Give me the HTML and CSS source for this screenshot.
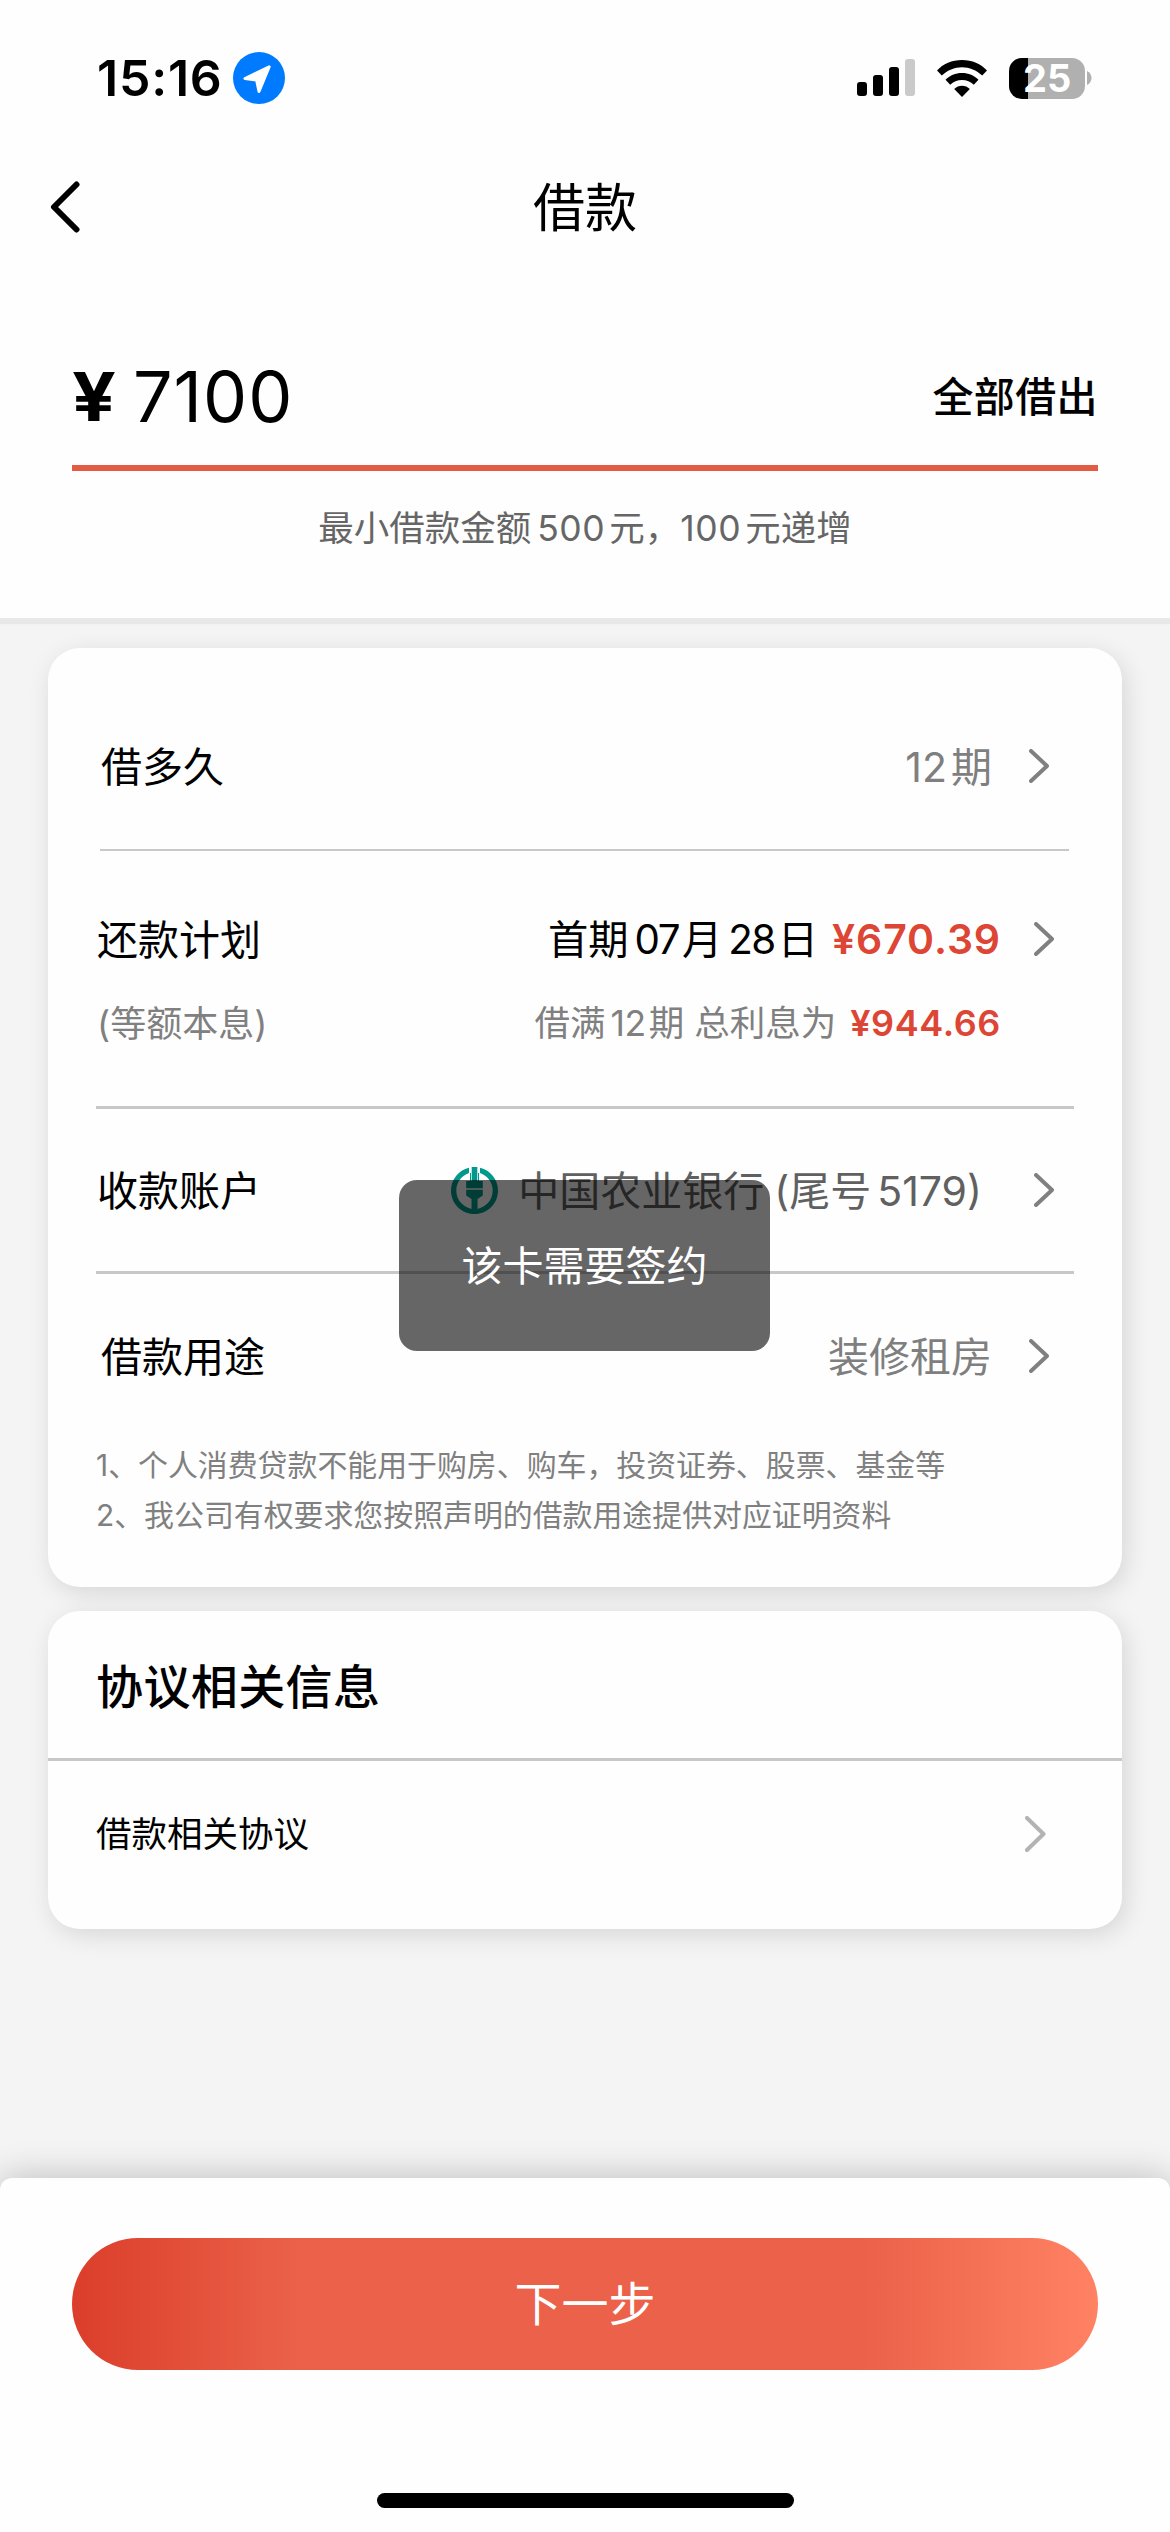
FILE: index.html
```html
<!DOCTYPE html>
<html lang="zh-CN">
<head>
<meta charset="utf-8">
<title>借款</title>
<link rel="stylesheet" href="styles.css">
</head>
<body>
<div class="screen">
  <header class="top">
    <div class="status">
      <span class="time">15:16</span>
      <svg class="locate" width="52" height="52" viewBox="0 0 52 52"><circle cx="26" cy="26" r="26" fill="#007bff"/><path d="M36.2 14.8 12 26.6 23.6 28 26 39.5Z" fill="#fff" stroke="#fff" stroke-width="3" stroke-linejoin="round"/></svg>
      <div class="indicators">
        <svg width="58" height="38" viewBox="0 0 58 38"><rect x="0" y="23" width="10" height="14" rx="3"/><rect x="16" y="16" width="10" height="21" rx="3"/><rect x="32" y="8" width="10" height="29" rx="3"/><rect x="48" y="0" width="10" height="37" rx="3" fill="#cacaca"/></svg>
        <svg width="50" height="37" viewBox="0 0 50 37"><path d="M25 0C35 0 44 4 50 10.500L45.200 15.500C39.500 10.200 32.500 7.200 25 7.200S10.500 10.200 4.800 15.500L0 10.500C6 4 15 0 25 0Z"/><path d="M25 13C31.500 13 37.300 15.600 41.500 19.800L36.800 24.800C33.700 21.800 29.600 20.100 25 20.100S16.300 21.800 13.200 24.800L8.500 19.800C12.700 15.600 18.500 13 25 13Z"/><path d="M25 25.700C28 25.700 30.800 26.900 32.800 29L25 37 17.200 29C19.200 26.900 22 25.700 25 25.700Z"/></svg>
        <div class="battery"><span class="cell">25</span><svg width="5" height="14" viewBox="0 0 5 14"><path d="M0 0C6 3 6 11 0 14Z" fill="#b0b0b0"/></svg></div>
      </div>
    </div>
    <nav class="nav">
      <svg class="back" width="30" height="52" viewBox="0 0 30 52"><path d="M26.500 3.500 4 26 26.500 48.500" fill="none" stroke="#000" stroke-width="6" stroke-linecap="round" stroke-linejoin="round"/></svg>
      <h1 class="title">借款</h1>
    </nav>
    <div class="amount">
      <span class="yen">¥</span><span class="value">7100</span>
      <span class="all">全部借出</span>
    </div>
    <p class="hint">最小借款金额<span class="num">500</span>元，<span class="num first">100</span>元递增</p>
  </header>

  <main class="content">
    <section class="card loan">
      <div class="row term">
        <span class="label">借多久</span>
        <span class="muted"><span class="num first">12</span>期</span>
        <svg class="chevron" width="20" height="34" viewBox="0 0 20 34"><path d="M2 2 18 17 2 32"/></svg>
      </div>
      <div class="plan">
        <div class="line">
          <span class="label">还款计划</span>
          <span class="due">首期<span class="num">07</span>月<span class="num">28</span>日</span>
          <span class="money">¥670.39</span>
          <svg class="chevron" width="20" height="34" viewBox="0 0 20 34"><path d="M2 2 18 17 2 32"/></svg>
        </div>
        <div class="line small">
          <span class="method">(等额本息)</span>
          <span class="total">借满<span class="num">12</span>期 总利息为</span>
          <span class="money">¥944.66</span>
        </div>
      </div>
      <div class="row account">
        <span class="label">收款账户</span>
        <svg class="bank" width="47" height="47" viewBox="0 0 47 47" fill="#00998b"><path d="M18 .7V6C10.500 8.500 5.300 15.500 5.300 23.500 5.300 33.800 13.400 42 23.500 42S41.700 33.800 41.700 23.500C41.700 15.500 36.500 8.500 29 6V.7C39.500 3.200 47 12.500 47 23.500 47 36.500 36.500 47 23.500 47S0 36.500 0 23.500C0 12.500 7.500 3.200 18 .7Z"/><path d="M20.700 0H26.300V14H20.700ZM15.200 14H19V6H20V14H27V6H28V14H31.800V21.300H15.200ZM15.200 22.700H31.800V28.500L26.500 32V43H20.500V32L15.200 28.500Z"/></svg>
        <span class="bankname">中国农业银行<span class="tail">(尾号<span class="num">5179</span>)</span></span>
        <svg class="chevron" width="20" height="34" viewBox="0 0 20 34"><path d="M2 2 18 17 2 32"/></svg>
      </div>
      <div class="row purpose">
        <span class="label">借款用途</span>
        <span class="muted">装修租房</span>
        <svg class="chevron" width="20" height="34" viewBox="0 0 20 34"><path d="M2 2 18 17 2 32"/></svg>
      </div>
      <div class="notes">
        <p>1、个人消费贷款不能用于购房、购车，投资证券、股票、基金等</p>
        <p>2、我公司有权要求您按照声明的借款用途提供对应证明资料</p>
      </div>
    </section>

    <section class="card agreement">
      <h2 class="heading">协议相关信息</h2>
      <div class="item">
        <span>借款相关协议</span>
        <svg class="chevron light" width="21" height="36" viewBox="0 0 21 36"><path d="M2 2 18.500 18 2 34"/></svg>
      </div>
    </section>
  </main>

  <footer class="bottom">
    <button class="next">下一步</button>
    <div class="home"></div>
  </footer>

  <div class="toast">该卡需要签约</div>
</div>
</body>
</html>
```
FILE: styles.css
```css
* {
  box-sizing: border-box;
}

body,
h1,
h2,
p {
  margin: 0;
  font-weight: 400;
}

body {
  background: #f4f4f4;
  color: #000;
  font-family: Inter, "Noto Sans CJK SC", sans-serif;
}

svg {
  flex: none;
  display: block;
}

.screen {
  position: relative;
  display: flex;
  flex-direction: column;
  width: 1170px;
  height: 2532px;
  overflow: hidden;
  white-space: nowrap;
}

.top {
  height: 618px;
  background: #fefefe;
  box-shadow: 0 6px 1px #e8e8e8;
}

.status {
  display: flex;
  align-items: center;
  height: 156px;
  padding: 0 78px 0 97px;
}

.time {
  width: 136px;
  font-size: 50px;
  font-weight: 600;
  line-height: 60px;
  letter-spacing: 0.8px;
}

.indicators {
  display: flex;
  align-items: center;
  gap: 22px;
  margin-left: auto;
}

.battery {
  display: flex;
  align-items: center;
  gap: 2px;
}

.cell {
  width: 76px;
  height: 41px;
  padding-left: 14px;
  border-radius: 13px;
  background: linear-gradient(90deg, #000 19px, #b0b0b0 19px);
  color: #fff;
  font-size: 38px;
  font-weight: 700;
  line-height: 41px;
}

.nav {
  display: grid;
  grid-template-columns: 1fr auto 1fr;
  align-items: center;
  height: 102px;
  padding: 0 50px;
}

.title {
  padding-top: 3px;
  font-size: 52px;
  line-height: 60px;
}

.amount {
  display: flex;
  align-items: center;
  height: 144px;
  margin: 69px 72px 0;
  padding-top: 2px;
  border-bottom: 6px solid #e35b43;
}

.yen {
  width: 61px;
  font-size: 67px;
  font-weight: 700;
  line-height: 80px;
  transform: scaleX(1.15);
  transform-origin: left;
}

.value {
  font-size: 70px;
  line-height: 80px;
  letter-spacing: 1px;
}

.all {
  margin-left: auto;
  font-size: 41px;
  font-weight: 500;
  line-height: 50px;
  letter-spacing: 0.4px;
}

.hint {
  color: #666;
  font-size: 35.5px;
  line-height: 116px;
  text-align: center;
}

.num {
  margin: 0 4px 0 6px;
}

.num.first {
  margin-left: 0;
}

.hint .num {
  letter-spacing: 0.6px;
}

.content {
  padding: 30px 48px 0;
}

.card {
  border-radius: 32px;
  background: #fefefe;
  box-shadow: 4px 6px 24px rgba(0, 0, 0, 0.12);
  line-height: 1.2;
}

.loan {
  height: 939px;
  padding-top: 35px;
  font-size: 41px;
}

.row {
  display: flex;
  align-items: center;
}

.row > span,
.line > span,
.item > span {
  padding-top: 3px;
}

.label {
  margin-right: auto;
}

.muted {
  margin-right: 37px;
  color: #7f7f7f;
}

.chevron {
  fill: none;
  stroke: #808080;
  stroke-width: 4;
  stroke-linecap: round;
  stroke-linejoin: round;
}

.chevron.light {
  stroke: #b3b3b3;
}

.term {
  height: 168px;
  margin: 0 53px 0 52px;
  padding: 0 20px 0 1px;
  border-bottom: 2px solid #c8c8c8;
}

.plan {
  height: 258px;
  margin: 0 48px;
  padding: 46px 20px 0 1px;
  border-bottom: 3px solid #c8c8c8;
}

.line {
  display: flex;
  align-items: center;
  height: 84px;
}

.due {
  font-size: 40.3px;
}

.due .num {
  margin-right: 3px;
  letter-spacing: -1.5px;
}

.line .money {
  margin: 0 33px 0 14px;
  padding-top: 1px;
  color: #dd4534;
  font-weight: 600;
  letter-spacing: 0.9px;
}

.small {
  padding-right: 20px;
  color: #808080;
  font-size: 36px;
}

.small .money {
  letter-spacing: 0.6px;
}

.method {
  margin-right: auto;
}

.total {
  font-size: 35.5px;
}

.total .num {
  margin: 0 3px 0 5px;
  letter-spacing: -0.5px;
}

.account {
  height: 165px;
  margin: 0 48px;
  padding: 0 20px 0 1px;
  border-bottom: 3px solid #c8c8c8;
}

.bank {
  margin-right: 20px;
}

.bankname {
  margin-right: 52px;
  color: #606060;
}

.tail {
  margin-left: 10px;
}

.tail .num {
  margin-right: 0;
}

.purpose {
  height: 164px;
  margin: 0 53px;
  padding: 0 20px 0 0;
}

.notes {
  margin: 2px 48px 0;
  color: #808080;
  font-size: 29.9px;
  line-height: 50px;
}

.agreement {
  height: 318px;
  margin-top: 24px;
}

.heading {
  height: 150px;
  padding: 5px 48px 0;
  border-bottom: 3px solid #c8c8c8;
  font-size: 47px;
  font-weight: 500;
  line-height: 142px;
  letter-spacing: 0.4px;
}

.item {
  display: flex;
  align-items: center;
  justify-content: space-between;
  height: 146px;
  padding: 0 76px 0 48px;
  font-size: 35.5px;
}

.bottom {
  display: flex;
  flex-direction: column;
  align-items: center;
  height: 354px;
  margin-top: auto;
  padding-top: 60px;
  border-radius: 12px 12px 0 0;
  background: #fefefe;
  box-shadow: 0 0 36px rgba(0, 0, 0, 0.24);
}

.next {
  width: 1026px;
  height: 132px;
  padding: 0;
  border: 0;
  border-radius: 66px;
  background: linear-gradient(90deg, #db3e2b, #eb6149 22%, #eb6149 77%, #ff8263);
  color: #fff;
  font-family: inherit;
  font-size: 47px;
  line-height: 130px;
}

.home {
  width: 417px;
  height: 15px;
  margin-top: 123px;
  border-radius: 8px;
  background: #000;
}

.toast {
  position: absolute;
  top: 1180px;
  left: 399px;
  width: 371px;
  height: 171px;
  border-radius: 18px;
  background: rgba(0, 0, 0, 0.6);
  color: #fff;
  font-size: 41px;
  line-height: 172px;
  text-align: center;
}
```
